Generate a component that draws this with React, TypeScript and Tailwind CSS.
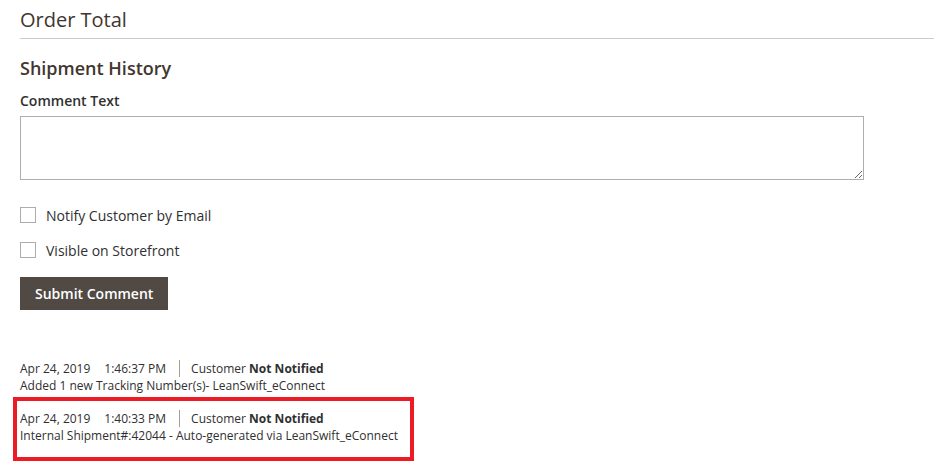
import { FC } from "react";

type Note = {
	date: string;
	time: string;
	text: string;
};

const notes: Note[] = [
	{ date: "Apr 24, 2019", time: "1:46:37 PM", text: "Added 1 new Tracking Number(s)- LeanSwift_eConnect" },
	{ date: "Apr 24, 2019", time: "1:40:33 PM", text: "Internal Shipment#:42044 - Auto-generated via LeanSwift_eConnect" },
];

const NoteItem: FC<{ note: Note }> = ({ note }) => (
	<div className="text-[12px] leading-[17px] text-[#303030]">
		<div className="flex items-stretch">
			<span className="mr-[14px]">{note.date}</span>
			<span className="mr-[13px]">{note.time}</span>
			<span className="border-l border-[#a79d95] pl-[11px]">
				Customer <span className="font-bold">Not Notified</span>
			</span>
		</div>
		<div>{note.text}</div>
	</div>
);

const Checkbox: FC<{ label: string }> = ({ label }) => (
	<label className="flex h-[20px] items-center">
		<span className="inline-block h-[16px] w-[16px] border border-[#adadad] bg-white" />
		<span className="ml-[10px] pt-[2px] text-[14px] leading-[20px] text-[#303030]">{label}</span>
	</label>
);

const App: FC = () => {
	return (
		<div className="min-h-[471px] bg-white pl-[20px] font-['Open_Sans',sans-serif] text-[#303030]">
			<h2 className="mt-[8px] border-b border-[#cccccc] pb-[6px] text-[20px] font-normal leading-[24px] text-[#41362f]">
				Order Total
			</h2>
			<h3 className="mt-[19px] text-[18px] font-semibold leading-[21.6px] text-[#41362f]">Shipment History</h3>
			<div className="mt-[11px] text-[14px] font-semibold leading-[20px] text-[#303030]">Comment Text</div>
			<textarea className="mt-[5px] block h-[64px] w-[844px] border border-[#adadad] bg-white outline-none" />
			<div className="mt-[25px] flex flex-col gap-[15px]">
				<Checkbox label="Notify Customer by Email" />
				<Checkbox label="Visible on Storefront" />
			</div>
			<button className="mt-[17px] h-[33px] bg-[#514943] px-[15px] text-[14px] font-semibold text-white">
				Submit Comment
			</button>
			<div className="mt-[50px]">
				<NoteItem note={notes[0]} />
				<div className="-ml-[7px] mt-[3px] w-[401px] border-4 border-[#ed1c24] pb-[13px] pl-[3px] pt-[9px]">
					<NoteItem note={notes[1]} />
				</div>
			</div>
		</div>
	);
};

export default App;
